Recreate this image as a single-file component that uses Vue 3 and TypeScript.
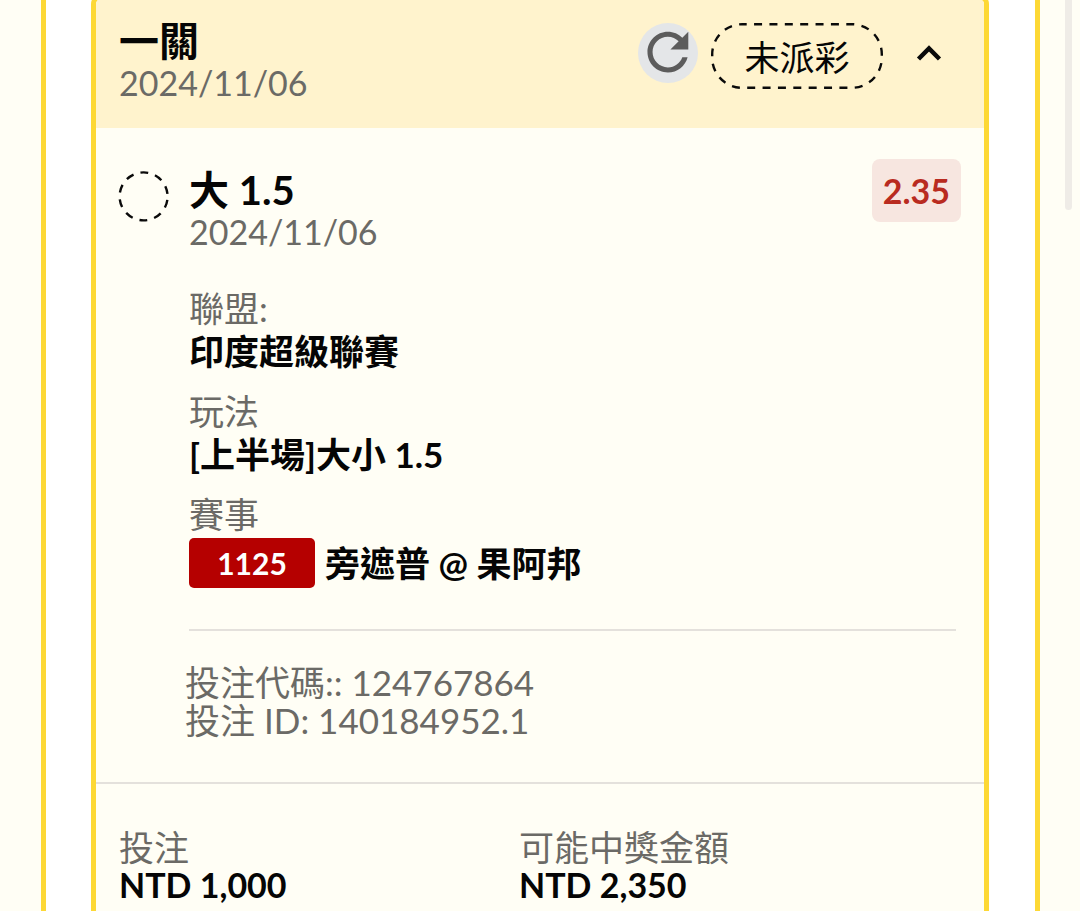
<script setup lang="ts">
import { ref } from 'vue'

interface Amount {
  label: string
  value: string
}

const expanded = ref(true)

const amounts: Amount[] = [
  { label: '投注', value: 'NTD 1,000' },
  { label: '可能中獎金額', value: 'NTD 2,350' },
]
</script>

<template>
  <main class="page">
    <div class="panel">
      <article class="card">
        <header class="head">
          <div class="head-text">
            <h1 class="title">一關</h1>
            <time class="date" datetime="2024-11-06">2024/11/06</time>
          </div>
          <div class="actions">
            <button class="refresh" type="button" aria-label="重新整理">
              <svg viewBox="0.3 0.6 23.5 23.5" aria-hidden="true">
                <path
                  fill="#5c5c5c"
                  d="M17.65 6.35C16.2 4.9 14.21 4 12 4c-4.42 0-7.99 3.58-7.99 8s3.57 8 7.99 8c3.73 0 6.84-2.55 7.73-6h-2.08c-.82 2.33-3.04 4-5.65 4-3.31 0-6-2.69-6-6s2.69-6 6-6c1.66 0 3.14.69 4.22 1.78L13 11h7V4l-2.35 2.35z"
                />
              </svg>
            </button>
            <span class="status">
              <svg class="outline" viewBox="0 0 172 66" aria-hidden="true">
                <rect x="1.2" y="1.2" width="169.6" height="63.6" rx="30" />
              </svg>
              <span class="status-text">未派彩</span>
            </span>
            <button
              class="toggle"
              type="button"
              aria-label="收合"
              :aria-expanded="expanded"
              @click="expanded = !expanded"
            >
              <svg viewBox="0 0 30 30" aria-hidden="true">
                <path d="M4.5 20L15 9.5L25.5 20" fill="none" stroke="#0a0a0a" stroke-width="4.5" />
              </svg>
            </button>
          </div>
        </header>

        <section v-show="expanded" class="bet">
          <svg class="pending" viewBox="0 0 50 50" aria-hidden="true">
            <circle cx="24.6" cy="25.4" r="24" />
          </svg>
          <div class="detail">
            <div class="pick-row">
              <div>
                <h2 class="title">大 1.5</h2>
                <time class="date" datetime="2024-11-06">2024/11/06</time>
              </div>
              <span class="odds">2.35</span>
            </div>
            <dl class="facts">
              <div class="fact">
                <dt>聯盟:</dt>
                <dd>印度超級聯賽</dd>
              </div>
              <div class="fact">
                <dt>玩法</dt>
                <dd>[上半場]大小 1.5</dd>
              </div>
              <div class="fact match">
                <dt>賽事</dt>
                <dd><span class="code">1125</span><span>旁遮普 @ 果阿邦</span></dd>
              </div>
            </dl>
            <div class="ids">
              <p>投注代碼:: 124767864</p>
              <p>投注 ID: 140184952.1</p>
            </div>
          </div>
        </section>

        <dl class="amounts">
          <div v-for="item in amounts" :key="item.label">
            <dt>{{ item.label }}</dt>
            <dd>{{ item.value }}</dd>
          </div>
        </dl>
      </article>
    </div>
    <div class="scroll-thumb" aria-hidden="true"></div>
  </main>
</template>

<style>
body {
  margin: 0;
}
</style>

<style scoped>
.page {
  position: relative;
  box-sizing: border-box;
  height: 100vh;
  overflow: hidden;
  padding: 0 40px 0 41px;
  background: #fffef5;
  color: #050505;
  font-family: Lato, "Noto Sans CJK TC", sans-serif;
  font-size: 35px;
  line-height: 44px;
}
h1, h2, p, dl, dd {
  margin: 0;
}
button {
  padding: 0;
  border: 0;
  background: none;
  cursor: pointer;
}
svg {
  display: block;
  overflow: visible;
}
.panel {
  box-sizing: border-box;
  min-height: 100%;
  padding: 0 46px 0 45px;
  border: solid #fdd835;
  border-width: 0 5px;
  background: #fff;
}
.card {
  margin-top: -6px;
  min-height: calc(100vh + 6px);
  box-sizing: border-box;
  overflow: hidden;
  border: 5px solid #fdd835;
  border-bottom: 0;
  border-radius: 10px 10px 0 0;
  background: #fffef5;
}
.head {
  display: flex;
  justify-content: space-between;
  align-items: flex-start;
  padding: 21px 40px 25px 23px;
  background: #fff3cd;
}
.title {
  font-size: 40px;
  font-weight: 700;
  line-height: 42px;
}
.date {
  display: block;
  font-size: 34px;
  line-height: 41px;
  color: #6b6a66;
}
.actions {
  display: flex;
  align-items: flex-start;
  padding-top: 3px;
}
.refresh {
  width: 60px;
  height: 60px;
  margin-right: 13px;
  border-radius: 50%;
  background: #e4e6e8;
}
.status {
  position: relative;
  width: 172px;
  height: 66px;
  margin-right: 31px;
  line-height: 69px;
  text-align: center;
}
.outline {
  position: absolute;
  inset: 0;
}
.outline rect,
.pending circle {
  fill: none;
  stroke: #0a0a0a;
  stroke-width: 2.4;
}
.outline rect {
  stroke-dasharray: 8 7.37;
  stroke-dashoffset: 3.5;
}
.pending circle {
  stroke-dasharray: 8 7.08;
  stroke-dashoffset: -3.54;
}
.toggle {
  width: 30px;
  height: 30px;
  margin-top: 16px;
}
.bet {
  display: grid;
  grid-template-columns: 50px 1fr;
  column-gap: 20px;
  padding: 31px 23px 43px;
}
.pending {
  width: 50px;
  height: 50px;
  margin-top: 12px;
}
.pick-row {
  display: flex;
  justify-content: space-between;
  align-items: flex-start;
}
.pick-row .title {
  margin-top: 10px;
}
.odds {
  padding: 0 11px;
  border-radius: 8px;
  background: #f7e6e0;
  color: #b92b20;
  font-size: 34px;
  font-weight: 700;
  line-height: 63px;
}
.facts {
  display: flex;
  flex-direction: column;
  gap: 16px;
  margin-top: 34px;
  margin-right: 5px;
  padding-bottom: 41px;
  border-bottom: 2px solid #e4e1dc;
}
dt {
  color: #6b6a66;
  line-height: 44px;
}
dd {
  font-weight: 700;
  line-height: 43px;
}
.match dd {
  display: flex;
  align-items: center;
  gap: 10px;
  margin-top: 2px;
  line-height: 50px;
}
.code {
  width: 126px;
  border-radius: 5px;
  background: #b50000;
  color: #fff;
  font-size: 30px;
  text-align: center;
}
.ids {
  margin: 32px 0 0 -4px;
  color: #6b6a66;
  line-height: 38px;
}
.amounts {
  display: grid;
  grid-template-columns: 400px 1fr;
  padding: 44px 23px;
  border-top: 2px solid #e4e1dc;
}
.amounts dt,
.amounts dd {
  line-height: 38px;
}
.amounts dd {
  font-size: 34px;
}
.scroll-thumb {
  position: absolute;
  top: -10px;
  right: 8px;
  width: 7px;
  height: 220px;
  border-radius: 4px;
  background: #efece7;
}
</style>
